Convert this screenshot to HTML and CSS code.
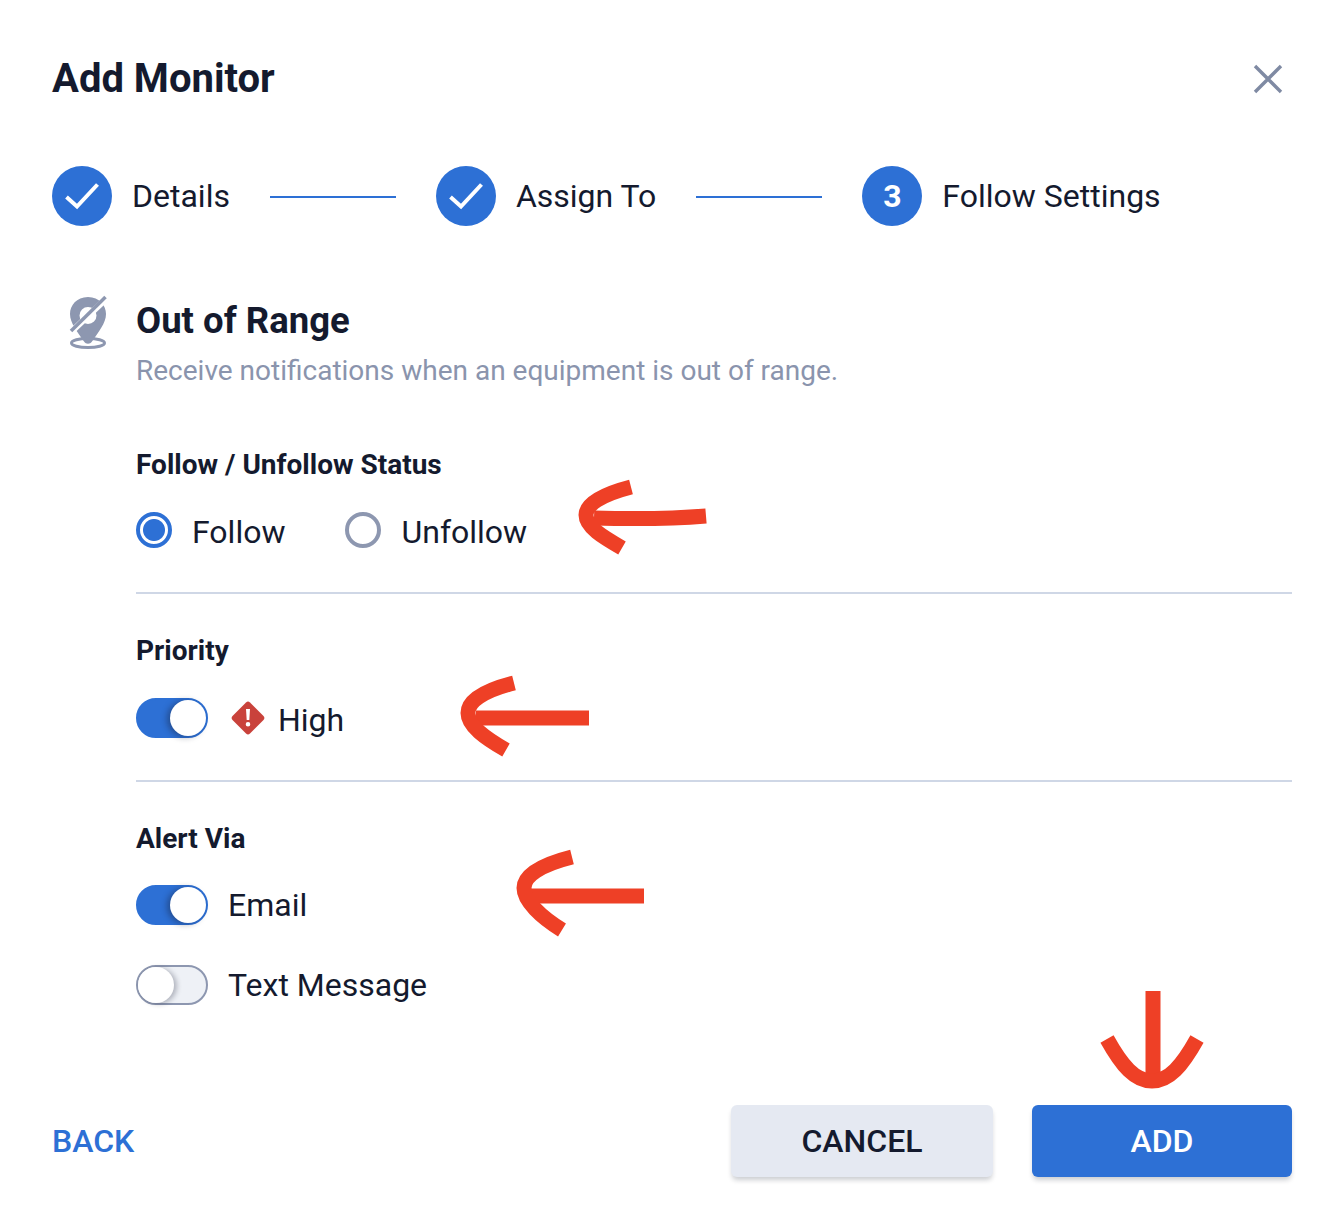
FILE: index.html
```html
<!DOCTYPE html>
<html lang="en">
<head>
<meta charset="utf-8">
<title>Add Monitor</title>
<link rel="stylesheet" href="styles.css">
</head>
<body>
<main class="dialog">
  <header class="head">
    <h1 class="title">Add Monitor</h1>
    <svg class="close" viewBox="0 0 30 30"><path d="M2 2 28 28M28 2 2 28"/></svg>
  </header>
  <ol class="steps">
    <li class="step">
      <span class="dot"><svg viewBox="0 0 60 60"><path d="M14.500 31 25 40.500 45.500 18.500"/></svg></span>
      <span class="step-label">Details</span>
    </li>
    <li class="line"></li>
    <li class="step">
      <span class="dot"><svg viewBox="0 0 60 60"><path d="M14.500 31 25 40.500 45.500 18.500"/></svg></span>
      <span class="step-label">Assign To</span>
    </li>
    <li class="line"></li>
    <li class="step">
      <span class="dot">3</span>
      <span class="step-label">Follow Settings</span>
    </li>
  </ol>
  <section class="intro">
    <svg class="pin" viewBox="0 0 40 54">
      <path class="pin-fill" fill-rule="evenodd" d="M20 2C8.500 2 2 10.500 2 19c0 9 7.500 18 14 27.500 2 3 6 3 8 0C30.500 37 38 28 38 19 38 10.500 31.500 2 20 2Zm0 10a8.500 8.500 0 1 1 0 17 8.500 8.500 0 0 1 0-17Z"/>
      <ellipse class="pin-ring" cx="20" cy="48" rx="16.500" ry="4.500"/>
      <path class="pin-gap" d="M39 3 1 39"/>
      <path class="pin-slash" d="M37.500 2 3 36"/>
    </svg>
    <div>
      <h2 class="section-title">Out of Range</h2>
      <p class="section-sub">Receive notifications when an equipment is out of range.</p>
    </div>
  </section>
  <section class="group group-follow">
    <h3 class="group-title">Follow / Unfollow Status</h3>
    <div class="radios">
      <label class="option"><span class="radio radio-on"></span><span class="low-text">Follow</span></label>
      <label class="option"><span class="radio"></span><span class="low-text">Unfollow</span></label>
    </div>
  </section>
  <section class="group group-priority">
    <h3 class="group-title">Priority</h3>
    <div class="option">
      <span class="toggle toggle-on"><span class="knob"></span></span>
      <svg class="prio" viewBox="0 0 34 34"><path class="prio-bg" d="M15 1.500a3 3 0 0 1 4 0L32.500 15a3 3 0 0 1 0 4L19 32.500a3 3 0 0 1-4 0L1.500 19a3 3 0 0 1 0-4Z"/><path class="prio-mark" d="M15 8h4l-.7 11h-2.600ZM17 21a2.300 2.300 0 1 1 0 4.600 2.300 2.300 0 0 1 0-4.600Z"/></svg>
      <span class="low-text prio-text">High</span>
    </div>
  </section>
  <section class="group group-alert">
    <h3 class="group-title">Alert Via</h3>
    <div class="option">
      <span class="toggle toggle-on"><span class="knob"></span></span>Email
    </div>
    <div class="option option-second">
      <span class="toggle"><span class="knob"></span></span>Text Message
    </div>
  </section>
  <footer class="foot">
    <button class="btn btn-back">BACK</button>
    <button class="btn btn-cancel">CANCEL</button>
    <button class="btn btn-add">ADD</button>
  </footer>
</main>
<svg class="arrows" viewBox="0 0 1344 1228">
  <path d="M706 516C670 519 630 519 594 518"/>
  <path d="M631 487C600 495 586 505 586 515 586 527 603 537 622 548"/>
  <path d="M589 718H476"/>
  <path d="M514 683C482 691 468 702 468 713 468 726 485 738 506 750"/>
  <path d="M644 896H530"/>
  <path d="M572 857C540 865 524 876 524 888 524 901 541 917 562 930"/>
  <path d="M1153 991V1080"/>
  <path d="M1107 1039C1122 1066 1135 1081 1152 1081 1169 1081 1182 1066 1197 1039"/>
</svg>
</body>
</html>
```
FILE: styles.css
```css
* { box-sizing: border-box; }
html, body { margin: 0; padding: 0; background: #fff; }
body { font-family: Roboto, "Liberation Sans", sans-serif; color: #141a2e; width: 1344px; height: 1228px; overflow: hidden; position: relative; }
h1, h2, h3, p, ol { margin: 0; padding: 0; }
.dialog { padding: 55px 52px 0; }
.head { display: flex; justify-content: space-between; align-items: center; height: 48px; }
.title { font-size: 40px; font-weight: 700; line-height: 48px; }
.close { width: 30px; height: 30px; margin-right: 9px; fill: none; stroke: #7f8aa3; stroke-width: 3.4; }
.steps { list-style: none; display: flex; align-items: center; margin-top: 63px; height: 60px; }
.step { display: flex; align-items: center; gap: 20px; }
.dot { width: 60px; height: 60px; border-radius: 50%; background: #2d70d5; color: #fff; font-size: 32px; font-weight: 700; display: flex; align-items: center; justify-content: center; }
.dot svg { width: 60px; height: 60px; fill: none; stroke: #fff; stroke-width: 4; }
.step-label { font-size: 32px; line-height: 40px; }
.line { width: 126px; height: 2px; background: #2d70d5; margin: 2px 40px 0; }
.intro { display: flex; align-items: flex-start; margin-top: 70px; padding-left: 16px; }
.pin { width: 40px; height: 54px; margin-right: 28px; flex: none; margin-top: -1px; }
.pin-fill { fill: #8d97b0; }
.pin-ring { fill: none; stroke: #8d97b0; stroke-width: 3; }
.pin-gap { stroke: #fff; stroke-width: 6; fill: none; }
.pin-slash { stroke: #8d97b0; stroke-width: 3.500; fill: none; }
.section-title { font-size: 36.5px; font-weight: 700; line-height: 46px; margin-top: 2px; }
.section-sub { font-size: 28px; line-height: 36px; color: #8a94ad; margin-top: 9px; }
.group { margin-left: 84px; }
.group-follow { margin-top: 62px; height: 143px; border-bottom: 2px solid #cfd7e6; }
.group-priority { height: 188px; padding-top: 43px; border-bottom: 2px solid #cfd7e6; }
.group-alert { padding-top: 43px; }
.group-title { font-size: 28px; font-weight: 700; line-height: 28px; }
.radios { display: flex; gap: 60px; margin-top: 31px; }
.option { display: flex; align-items: center; font-size: 32px; height: 40px; gap: 20px; }
.low-text { margin-top: 4px; }
.group-priority .option { margin-top: 33px; }
.group-alert .option { margin-top: 32px; }
.group-alert .option-second { margin-top: 40px; }
.radio { width: 36px; height: 36px; border-radius: 50%; border: 4px solid #8d97b0; display: block; }
.radio-on { border-color: #2d70d5; background: radial-gradient(circle, #2d70d5 0 10.500px, #fff 11.500px); }
.toggle { width: 72px; height: 40px; border-radius: 20px; border: 2px solid #8d97b0; background: #eef1f6; display: flex; position: relative; flex: none; }
.knob { width: 36px; height: 36px; border-radius: 50%; background: #fff; box-shadow: 3px 1px 5px rgba(20, 26, 46, .28); }
.toggle-on { border-color: #2d70d5; background: #2d70d5; justify-content: flex-end; }
.toggle-on .knob { box-shadow: -3px 1px 6px rgba(20, 26, 46, .4); }
.prio { width: 34px; height: 34px; margin-left: 3px; }
.prio-bg { fill: #c9423b; }
.prio-mark { fill: #fff; }
.prio-text { margin-left: -7px; }
.foot { position: absolute; left: 52px; right: 52px; top: 1105px; display: flex; align-items: center; }
.btn { font-family: inherit; font-size: 32px; font-weight: 500; height: 72px; border: 0; border-radius: 6px; padding: 0; }
.btn-back { background: none; color: #2d70d5; margin-right: auto; text-align: left; }
.btn-cancel { width: 262px; background: #e5e9f2; color: #141a2e; margin-right: 39px; box-shadow: 0 4px 5px -1px rgba(20, 26, 46, .22); }
.btn-add { width: 260px; background: #2d70d5; color: #fff; box-shadow: 0 4px 5px -1px rgba(20, 26, 46, .22); }
.arrows { position: absolute; left: 0; top: 0; width: 1344px; height: 1228px; pointer-events: none; fill: none; stroke: #ee4026; stroke-width: 15; }
```
